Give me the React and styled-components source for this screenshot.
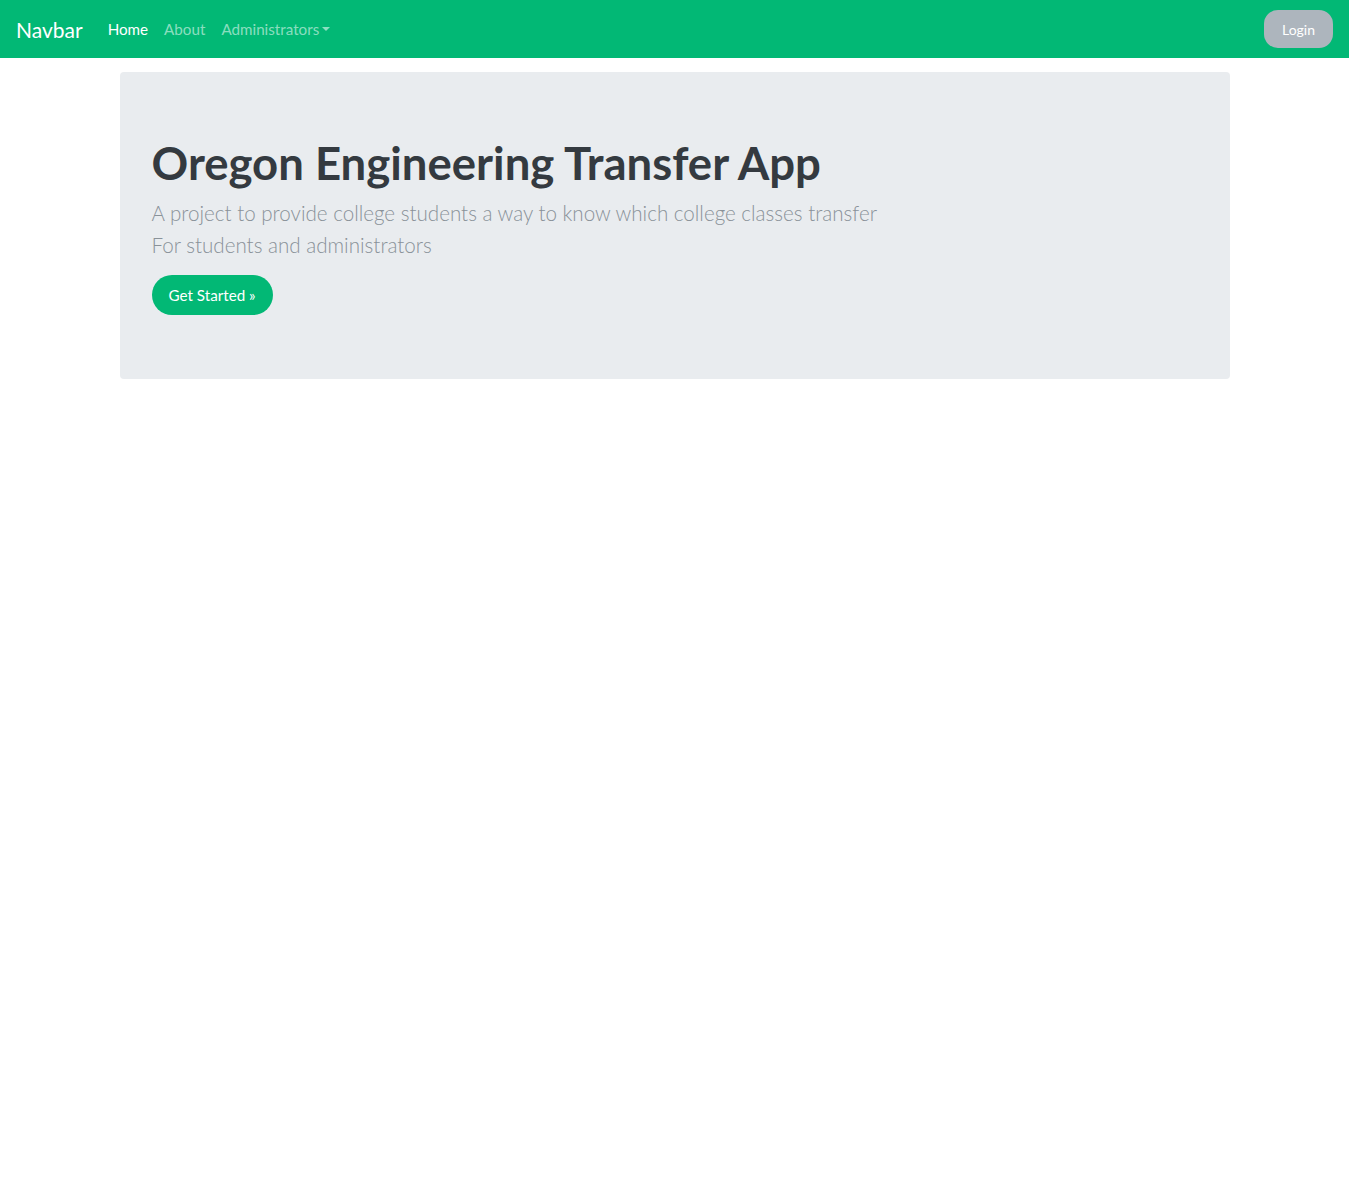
import React from 'react';
import styled, { createGlobalStyle } from 'styled-components';

const GlobalStyle = createGlobalStyle`
  body {
    margin: 0;
    font-family: Lato, "Noto Sans", "Liberation Sans", sans-serif;
    background: #fff;
    color: #343a40;
  }
`;

const NavBar = styled.nav`
  display: flex;
  align-items: center;
  height: 58px;
  padding: 0 16px;
  background: #02b875;
  box-sizing: border-box;
`;

const Brand = styled.a`
  font-size: 21px;
  color: #fff;
  margin-right: 25px;
  text-decoration: none;
`;

const NavList = styled.ul`
  display: flex;
  list-style: none;
  margin: 0;
  padding: 0;
  gap: 16px;
  flex: 1;
`;

const NavLink = styled.a`
  font-size: 15.2px;
  color: ${(p) => (p.$active ? '#fff' : 'rgba(255, 255, 255, 0.55)')};
  text-decoration: none;
  display: flex;
  align-items: center;
`;

const Caret = styled.span`
  display: inline-block;
  margin-left: 3px;
  border-top: 4px solid currentColor;
  border-left: 4px solid transparent;
  border-right: 4px solid transparent;
`;

const LoginButton = styled.button`
  height: 38px;
  padding: 0 18px;
  border: none;
  border-radius: 14px;
  background: #adb5bd;
  color: #fff;
  font-family: inherit;
  font-size: 14px;
`;

const Container = styled.main`
  max-width: 1110px;
  margin: 14px auto 0;
`;

const Jumbotron = styled.section`
  background: #e9ecef;
  border-radius: 4px;
  padding: 64px 32px;
`;

const Title = styled.h1`
  margin: 0 0 6px;
  font-size: 45.5px;
  font-weight: 700;
  line-height: 1.2;
  color: #343a40;
`;

const Lead = styled.p`
  margin: 0 0 14px;
  font-size: 20.6px;
  font-weight: 300;
  line-height: 32px;
  color: #8a9299;
`;

const StartButton = styled.a`
  display: inline-flex;
  align-items: center;
  height: 40px;
  padding: 0 17px;
  border-radius: 20px;
  background: #02b875;
  color: #fff;
  font-size: 15.2px;
  text-decoration: none;
`;

export default function App() {
  return (
    <>
      <GlobalStyle />
      <NavBar>
        <Brand href="#">Navbar</Brand>
        <NavList>
          <li><NavLink href="#" $active>Home</NavLink></li>
          <li><NavLink href="#">About</NavLink></li>
          <li><NavLink href="#">Administrators<Caret /></NavLink></li>
        </NavList>
        <LoginButton>Login</LoginButton>
      </NavBar>
      <Container>
        <Jumbotron>
          <Title>Oregon Engineering Transfer App</Title>
          <Lead>
            A project to provide college students a way to know which college classes transfer
            <br />
            For students and administrators
          </Lead>
          <StartButton href="#">Get Started &raquo;</StartButton>
        </Jumbotron>
      </Container>
    </>
  );
}
